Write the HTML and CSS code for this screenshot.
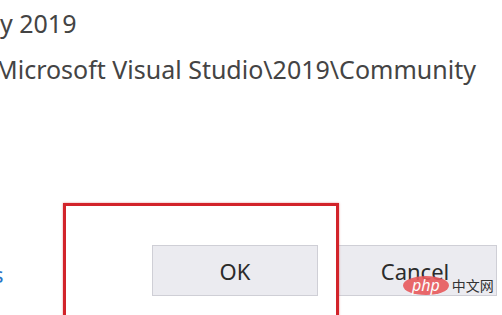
FILE: index.html
```html
<!DOCTYPE html>
<html lang="en">
<head>
	<meta charset="utf-8" />
	<title>Visual Studio Location</title>
	<link rel="stylesheet" href="styles.css">
</head>
<body>
	<div class="dialog">
		<div class="info">
			<div class="info-line first">y 2019</div>
			<div class="info-line second">Microsoft Visual Studio\2019\Community</div>
		</div>
		<div class="footer">
			<a class="link" href="#">s</a>
			<div class="buttons">
				<button class="btn ok">OK</button>
				<button class="btn cancel">Cancel</button>
			</div>
		</div>
		<div class="highlight"></div>
		<div class="watermark"><span class="php">php</span><span class="cn">中文网</span></div>
	</div>
</body>
</html>
```

FILE: styles.css
```css
body {
	margin: 0;
	background: #fff;
	font-family: "Noto Sans", "Open Sans", sans-serif;
	color: #444;
	overflow: hidden;
}

.dialog {
	position: relative;
	width: 502px;
	height: 315px;
	overflow: hidden;
}

.info-line {
	font-size: 25px;
	line-height: 46px;
	white-space: nowrap;
}

.info-line.second {
	margin-left: -5px;
}

.footer {
	display: flex;
	align-items: center;
	margin-top: 153px;
}

.link {
	color: #2a74c6;
	font-size: 22px;
	text-decoration: none;
	margin-left: -7px;
	width: 159px;
	margin-top: 6px;
}

.buttons {
	display: flex;
	gap: 19px;
}

.btn {
	height: 51px;
	background: #ebebf0;
	border: 1px solid #cfcfd6;
	font-family: "Noto Sans", "Open Sans", sans-serif;
	font-size: 22px;
	color: #2b2b2b;
	padding: 0;
}

.btn.ok {
	width: 166px;
}

.btn.cancel {
	width: 160px;
	padding-right: 4px;
}

.highlight {
	position: absolute;
	left: 63px;
	top: 203px;
	width: 270px;
	height: 130px;
	border: 3px solid #d2232a;
	box-shadow: 0 0 2px rgba(210, 35, 42, 0.5);
}

.watermark {
	position: absolute;
	left: 403px;
	top: 275px;
	display: flex;
	align-items: center;
}

.php {
	background: #e8595c;
	color: #fff;
	font-style: italic;
	font-size: 16px;
	line-height: 19px;
	padding: 0 9px;
	border-radius: 50%;
	opacity: 0.9;
}

.cn {
	font-family: "Noto Sans CJK SC", sans-serif;
	font-size: 14px;
	color: #333;
	margin-left: 3px;
}
```
